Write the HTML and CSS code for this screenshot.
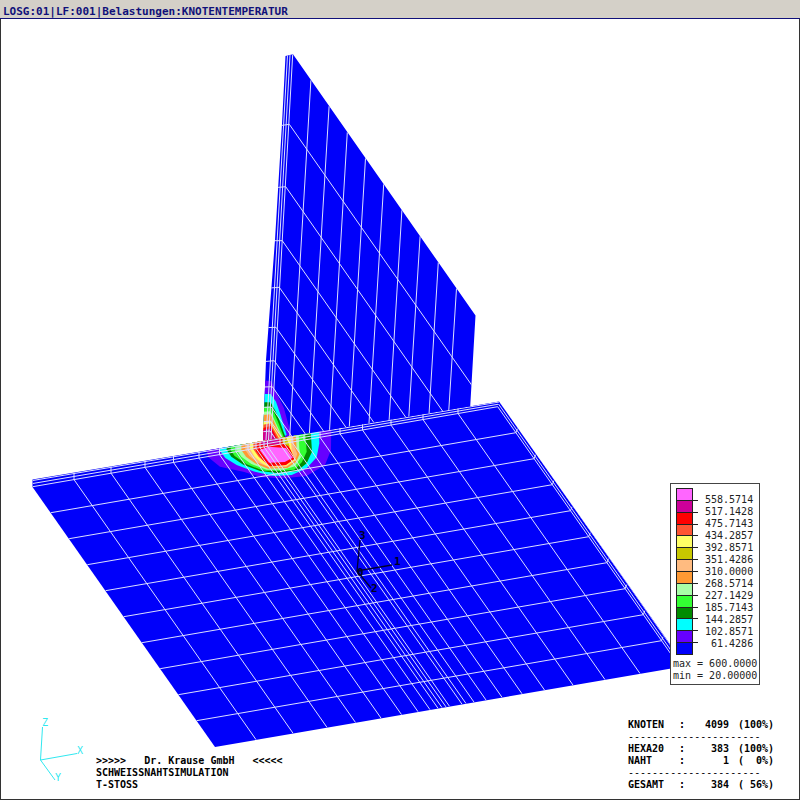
FILE: index.html
```html
<!DOCTYPE html>
<html lang="de">
<head>
<meta charset="utf-8">
<title>Knotentemperatur</title>
<link rel="stylesheet" href="styles.css">
</head>
<body>
<header class="titlebar">LOSG:01|LF:001|Belastungen:KNOTENTEMPERATUR</header>
<main class="view">
  <svg class="model" viewBox="1 19 798 780" preserveAspectRatio="xMidYMin meet" role="img" aria-label="T-Stoss">
    <defs>
      <path id="fin" d="M285.500 56L293 54.300L475.500 315.500L470 410L300 445L263 440L266 360L275 240L282 124Z"/>
      <path id="plate" d="M32.500 479.500L499 401.500L682 661L680 667L215 747L32.500 487Z"/>
      <clipPath id="finClip"><use href="#fin"/></clipPath>
      <clipPath id="plateClip"><use href="#plate"/></clipPath>
    </defs>

    <!-- upright plate -->
    <use href="#fin" class="blue"/>
    <g clip-path="url(#finClip)">
      <g transform="translate(200 370) scale(.33333)">
        <path fill="#6600ff" d="M180 30L215 34L232 75L252 115L275 200L180 240Z"/>
        <path fill="#00ffff" d="M180 72L212 72L228 95L240 130L260 195L180 230Z"/>
        <path fill="#008c00" d="M180 97L212 97L226 122L238 150L256 200L180 230Z"/>
        <path fill="#33ff33" d="M180 110L211 110L224 132L234 155L251 200L180 230Z"/>
        <path fill="#a8ffa8" d="M180 126L211 124L221 145L247 200L180 230Z"/>
        <path fill="#ff9933" d="M180 136L211 133L219 148L243 200L180 230Z"/>
        <path fill="#ffff66" d="M180 156L211 154L240 205L180 230Z"/>
        <path fill="#ff5533" d="M180 166L211 160L237 205L180 230Z"/>
        <path fill="#ff0000" d="M180 176L212 168L234 210L180 230Z"/>
        <path fill="#cc0099" d="M180 182L212 176L230 210L180 230Z"/>
      </g>
      <g class="mesh">
        <path d="M292.700 54.300L271 440M290 55L268.500 440M287.500 55L266 440M310.900 80.300l-22 370M329.100 106.300l-20.500 340M347.300 132.300l-18.500 310M365.500 158.300l-17.500 290M383.700 184.300l-16 260M401.900 210.300l-14 230M420.100 236.300l-12.500 200M438.300 262.300l-11 180M456.500 288.300l-9.500 150"/>
        <path d="M281 125.500L289.300 124.300l200 286M277 187.500L285.700 186.700l200 286M274 240.700H282.300l200 286M270 288L279.300 287.300l200 286M267 327.600L276 327.300l200 286M265 361.500L274.300 360.700l200 286M264 387L272.300 386.700l200 286M262 407.500L271.300 407l200 286M261 422L270.500 421l200 286M260 432L270 431l200 286"/>
      </g>
    </g>

    <!-- base plate -->
    <use href="#plate" class="blue"/>
    <g clip-path="url(#plateClip)">
      <g transform="translate(200 370) scale(.33333)">
        <path fill="#6600ff" d="M15 220L25 262L60 290L130 305L185 322L250 325L320 318L375 285L393 240L394 150Z"/>
        <path fill="#00ffff" d="M57 210L60 242L76 264L110 285L160 304L220 318L275 315L320 295L350 262L358 220L356 150Z"/>
        <path fill="#008c00" d="M80 210L80 240L94 260L130 284L180 303L230 309L290 304L320 280L336 245L330 150Z"/>
        <path fill="#33ff33" d="M90 210L93 242L104 258L140 283L190 302L240 303L283 299L306 276L320 245L313 150Z"/>
        <path fill="#a8ffa8" d="M110 205L110 240L124 260L154 282L200 299L250 299L285 289L303 262L298 236L294 150Z"/>
        <path fill="#ff9933" d="M124 205L124 240L138 260L165 280L204 296L262 294L288 276L299 252L290 234L284 150Z"/>
        <path fill="#ffbb80" d="M136 205L136 240L148 258L174 278L208 292L258 291L284 273L292 252L282 228L276 150Z"/>
        <path fill="#ffff66" d="M150 205L150 236L164 260L184 278L208 292L260 287L286 269L275 240L268 150Z"/>
        <path fill="#ff5533" d="M160 200L160 238L176 260L194 276L210 290L258 285L283 266L268 234L250 170Z"/>
        <path fill="#ff0000" d="M166 222L169 244L186 268L210 288L257 285L284 266L269 234L246 205Z"/>
        <path fill="#cc0099" d="M184 200L184 226L240 222L232 200Z"/>
        <path fill="#ff66ff" d="M179 240L207 278L254 276L278 263L258 234L205 230Z"/>
        <path fill="#c8c800" d="M246 202L258 200L263 214L270 230L256 224L248 218Z"/>
      </g>
      <g class="mesh">
        <path d="M32.700 480.500L499 402M32.700 483.500L498 404.300M32.700 486.700L497.700 406.700L680 667"/>
        <path d="M498.500 404l182 260M500 401.500l182 260"/>
        <path d="M50.900 512.700l465-80 1.500-4M69.100 538.700l465-80 1.500-4M87.300 564.700l465-80 1.500-4M105.500 590.700l465-80 1.500-4M123.700 616.700l465-80 1.500-4M141.900 642.700l465-80 1.500-4M160.100 668.700l465-80 1.500-4M178.300 694.700l465-80 1.500-4M196.500 720.700l465-80 1.500-4"/>
        <path d="M74 472.600v7l182 260M111 466.200v7l182 260M145 460.400v7l182 260M173.500 455.500v7l182 260M199 451.100v7l182 260M219.500 447.600v7l182 260M236 444.700v7l182 260M248 442.700v7l182 260M256 441.300v7l182 260M260 440.600v7l182 260M264 439.900v7l182 260M267.500 439.300v7l182 260M280 437.200v7l182 260M284 436.500v7l182 260M292 435.100v7l182 260M304 433v7l182 260M320 430.300v7l182 260M340 426.800v7l182 260M362.500 423v7l182 260M391 418.100v7l182 260M423 412.600v7l182 260M458 406.500v7l182 260"/>
      </g>
    </g>

    <!-- local and global coordinate axes -->
    <path class="local" d="M360 540L357 571L392 565M357 571L371 588"/>
    <g class="local-label"><text x="359" y="539">3</text><text x="394" y="565">1</text><text x="371" y="592">2</text><text x="357" y="576">0</text></g>
    <path class="axis" d="M42.500 727L40.500 760L77 753.500M40.500 760L55 780"/>
    <g class="axis-label"><text x="42" y="726">Z</text><text x="77" y="754">X</text><text x="55" y="781">Y</text></g>
  </svg>

  <div class="overlay">
    <section class="legend">
      <div class="scale">
        <div class="bar">
          <i class="c1"></i><i class="c2"></i><i class="c3"></i><i class="c4"></i><i class="c5"></i><i class="c6"></i><i class="c7"></i><i class="c8"></i><i class="c9"></i><i class="c10"></i><i class="c11"></i><i class="c12"></i><i class="c13"></i><i class="c14"></i>
        </div>
        <div class="values">
          <span>558.5714</span><span>517.1428</span><span>475.7143</span><span>434.2857</span><span>392.8571</span><span>351.4286</span><span>310.0000</span><span>268.5714</span><span>227.1429</span><span>185.7143</span><span>144.2857</span><span>102.8571</span><span>61.4286</span>
        </div>
      </div>
      <p>max = 600.0000</p>
      <p>min = 20.00000</p>
    </section>
    <footer class="foot">
      <pre class="caption">&gt;&gt;&gt;&gt;&gt;   Dr. Krause GmbH   &lt;&lt;&lt;&lt;&lt;
SCHWEISSNAHTSIMULATION
T-STOSS</pre>
      <table class="stats">
        <tbody>
          <tr><th scope="row">KNOTEN</th><td>:</td><td class="num">4099</td><td class="pct">(100%)</td></tr>
          <tr class="rule"><td colspan="4">----------------------</td></tr>
          <tr><th scope="row">HEXA20</th><td>:</td><td class="num">383</td><td class="pct">(100%)</td></tr>
          <tr><th scope="row">NAHT</th><td>:</td><td class="num">1</td><td class="pct">(&nbsp;&nbsp;0%)</td></tr>
          <tr class="rule"><td colspan="4">----------------------</td></tr>
          <tr><th scope="row">GESAMT</th><td>:</td><td class="num">384</td><td class="pct">(&nbsp;56%)</td></tr>
        </tbody>
      </table>
    </footer>
  </div>
</main>
</body>
</html>
```
FILE: styles.css
```css
* { box-sizing: border-box; }

body {
  margin: 0;
  min-height: 100vh;
  display: flex;
  flex-direction: column;
  background: #fff;
  color: #000;
  font: bold 10px/12px "DejaVu Sans Mono", monospace;
}

.titlebar {
  padding: 6px 3px 0;
  border-bottom: 1px solid #10107a;
  background: #d4d0c8;
  color: #10107a;
  font-size: 11px;
}

.view {
  flex: 1;
  display: grid;
  border: 1px solid #333;
  border-top: 0;
}

.model, .overlay { grid-area: 1 / 1; }
.model { width: 100%; display: block; }
.blue { fill: #0000fa; }
.mesh { fill: none; stroke: #dcdfff; stroke-width: 1; }
.local { fill: none; stroke: #000030; stroke-width: 1.3; }
.local-label { fill: #000020; font-size: 11px; }
.axis { fill: none; stroke: #30e8f0; }
.axis-label { fill: #30e8f0; font-size: 10px; font-weight: normal; }

.overlay {
  position: relative;
  display: flex;
  flex-direction: column;
  justify-content: flex-end;
}

.legend {
  align-self: flex-end;
  width: 90px;
  margin: 0 39px 34px 0;
  padding: 4px 2px 2px;
  border: 1px solid #444;
  background: #fff;
  color: #222;
  font-weight: normal;
}
.legend p { margin: 0; white-space: nowrap; }
.scale { display: flex; gap: 12px; height: 170px; padding: 0 3px 3px; }
.bar { width: 17px; display: flex; flex-direction: column; border: 1px solid #222; }
.bar i { flex: 1; position: relative; }
.bar i + i { border-top: 1px solid #222; }
.bar i + i::after {
  content: "";
  position: absolute;
  top: -1px;
  left: 100%;
  width: 6px;
  border-top: 1px solid #222;
}
.values {
  display: flex;
  flex-direction: column;
  padding: 6px 0 5px;
  text-align: right;
}
.values span { flex: 1; }

.c1 { background: #ff66ff; }
.c2 { background: #cc0099; }
.c3 { background: #ff0000; }
.c4 { background: #ff5533; }
.c5 { background: #ffff66; }
.c6 { background: #c8c800; }
.c7 { background: #ffbb80; }
.c8 { background: #ff9933; }
.c9 { background: #a8ffa8; }
.c10 { background: #33ff33; }
.c11 { background: #008c00; }
.c12 { background: #00ffff; }
.c13 { background: #6600ff; }
.c14 { background: #0000fa; }

.foot {
  display: flex;
  justify-content: space-between;
  align-items: flex-end;
  padding: 0 25px 8px 95px;
}
.caption { margin: 0; font: inherit; }

.stats { border-collapse: collapse; table-layout: fixed; width: 146px; }
.stats th, .stats td { padding: 0; font: inherit; white-space: nowrap; text-align: left; }
.stats th { width: 51px; }
.stats .num { width: 51px; padding-right: 8px; text-align: right; }
.stats .pct { width: 37px; text-align: right; }
.stats .rule td { font-weight: normal; }
```
